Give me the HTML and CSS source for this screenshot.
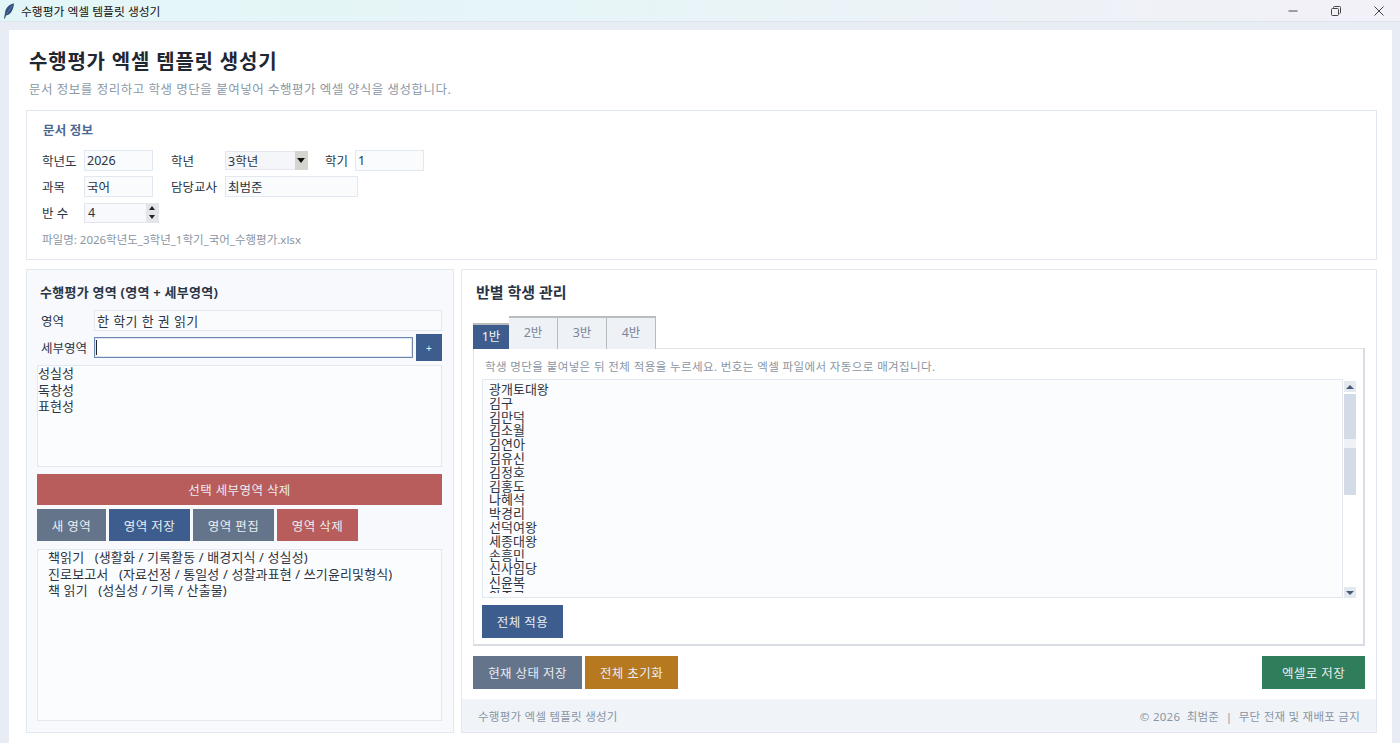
FILE: index.html
```html
<!DOCTYPE html>
<html lang="ko">
  <head>
    <meta charset="UTF-8" />
    <meta name="viewport" content="width=device-width, initial-scale=1.0" />
    <title>수행평가 엑셀 템플릿 생성기</title>
    <link rel="stylesheet" href="styles.css">
  </head>
  <body>
    <!-- 창 제목 표시줄 -->
    <header class="titlebar">
      <svg class="app-icon" width="12" height="16" viewBox="0 0 12 16">
        <path d="M11 0.5C6.5 1 2.5 4.5 2 10L1 15.5H2L3 12.5C8 12 10.5 6.5 11 0.5Z" fill="#34507e" />
        <path d="M9 3L3.5 11" stroke="#7f97bb" stroke-width="0.6" />
      </svg>
      <span class="titlebar-text">수행평가 엑셀 템플릿 생성기</span>
      <div class="window-controls">
        <svg width="10" height="10" viewBox="0 0 10 10"><path d="M0.5 5H9.5" stroke="#666" stroke-width="1.2" /></svg>
        <svg width="10" height="10" viewBox="0 0 10 10" fill="none" stroke="#444"><rect x="0.5" y="2.5" width="7" height="7" rx="1" /><path d="M2.5 2.5V1.5Q2.5 0.5 3.5 0.5H8.5Q9.5 0.5 9.5 1.5V6.5Q9.5 7.5 8.5 7.5" /></svg>
        <svg width="10" height="10" viewBox="0 0 10 10"><path d="M0.5 0.5L9.5 9.5M9.5 0.5L0.5 9.5" stroke="#444" /></svg>
      </div>
    </header>

    <main class="app-card">
      <h1 class="app-title">수행평가 엑셀 템플릿 생성기</h1>
      <p class="app-desc">문서 정보를 정리하고 학생 명단을 붙여넣어 수행평가 엑셀 양식을 생성합니다.</p>

      <!-- 문서 정보 -->
      <section class="doc-box">
        <h2 class="doc-title">문서 정보</h2>
        <div class="doc-row">
          <label class="doc-label">학년도</label>
          <input class="field field-short" value="2026" />
          <label class="doc-label doc-label-2">학년</label>
          <div class="select-box"><span>3학년</span><span class="select-arrow"></span></div>
          <label class="doc-label doc-label-3">학기</label>
          <input class="field field-short" value="1" />
        </div>
        <div class="doc-row">
          <label class="doc-label">과목</label>
          <input class="field field-short" value="국어" />
          <label class="doc-label doc-label-2">담당교사</label>
          <input class="field field-teacher" value="최범준" />
        </div>
        <div class="doc-row">
          <label class="doc-label">반 수</label>
          <div class="spin-box">
            <span>4</span>
            <span class="spin-btns"><i class="arrow-up"></i><i class="arrow-down"></i></span>
          </div>
        </div>
        <p class="file-name">파일명: 2026학년도_3학년_1학기_국어_수행평가.xlsx</p>
      </section>

      <div class="columns">
        <!-- 수행평가 영역 -->
        <section class="area-panel">
          <h2 class="area-title">수행평가 영역 (영역 + 세부영역)</h2>
          <div class="area-row">
            <label class="area-label">영역</label>
            <input class="field field-grow" value="한 학기 한 권 읽기" />
          </div>
          <div class="area-row area-row-sub">
            <label class="area-label">세부영역</label>
            <div class="field-focus"><span class="caret"></span></div>
            <button class="btn btn-blue btn-plus">+</button>
          </div>
          <div class="list-box sub-list">
            <div>성실성</div>
            <div>독창성</div>
            <div>표현성</div>
          </div>
          <button class="btn btn-red btn-wide">선택 세부영역 삭제</button>
          <div class="btn-row">
            <button class="btn btn-gray btn-new">새 영역</button>
            <button class="btn btn-blue btn-area">영역 저장</button>
            <button class="btn btn-gray btn-area">영역 편집</button>
            <button class="btn btn-red btn-area">영역 삭제</button>
          </div>
          <div class="list-box area-list">
            <div>책읽기&nbsp;&nbsp;&nbsp;(생활화 / 기록활동 / 배경지식 / 성실성)</div>
            <div>진로보고서&nbsp;&nbsp;&nbsp;(자료선정 / 통일성 / 성찰과표현 / 쓰기윤리및형식)</div>
            <div>책 읽기&nbsp;&nbsp;&nbsp;(성실성 / 기록 / 산출물)</div>
          </div>
        </section>

        <!-- 반별 학생 관리 -->
        <section class="class-panel">
          <div class="class-body">
            <h2 class="class-title">반별 학생 관리</h2>
            <div class="tabs">
              <div class="tab tab-active">1반</div>
              <div class="tab">2반</div>
              <div class="tab">3반</div>
              <div class="tab">4반</div>
            </div>
            <div class="tab-pane">
              <p class="hint">학생 명단을 붙여넣은 뒤 전체 적용을 누르세요. 번호는 엑셀 파일에서 자동으로 매겨집니다.</p>
              <div class="names-wrap">
                <div class="names">
                  <div class="names-inner">
                    <div>광개토대왕</div>
                    <div>김구</div>
                    <div>김만덕</div>
                    <div>김소월</div>
                    <div>김연아</div>
                    <div>김유신</div>
                    <div>김정호</div>
                    <div>김홍도</div>
                    <div>나혜석</div>
                    <div>박경리</div>
                    <div>선덕여왕</div>
                    <div>세종대왕</div>
                    <div>손흥민</div>
                    <div>신사임당</div>
                    <div>신윤복</div>
                    <div>안중근</div>
                  </div>
                </div>
                <div class="scrollbar">
                  <div class="scroll-btn"><i class="arrow-up"></i></div>
                  <div class="scroll-track">
                    <div class="scroll-thumb"><span class="scroll-grip"></span></div>
                  </div>
                  <div class="scroll-btn"><i class="arrow-down"></i></div>
                </div>
              </div>
              <button class="btn btn-blue btn-apply">전체 적용</button>
            </div>
            <div class="action-row">
              <button class="btn btn-gray btn-save">현재 상태 저장</button>
              <button class="btn btn-orange btn-reset">전체 초기화</button>
              <button class="btn btn-green btn-excel">엑셀로 저장</button>
            </div>
          </div>
          <footer class="class-footer">
            <span>수행평가 엑셀 템플릿 생성기</span>
            <span>© 2026 &nbsp;최범준 &nbsp;|&nbsp; 무단 전재 및 재배포 금지</span>
          </footer>
        </section>
      </div>
    </main>
  </body>
</html>
```

FILE: styles.css
```css
* {
  box-sizing: border-box;
}

html,
body {
  height: 100%;
}

body {
  margin: 0;
  display: flex;
  flex-direction: column;
  overflow: hidden;
  background-color: #e8edf5;
  color: #2b3442;
  font-family: "Noto Sans", "Noto Sans CJK KR", sans-serif;
  font-size: 12.5px;
}

/* 제목 표시줄 */
.titlebar {
  flex: none;
  display: flex;
  align-items: center;
  height: 22px;
  padding-left: 3px;
  background: linear-gradient(90deg, #e3f6f7 0%, #e6f5f7 40%, #f3f0f8 100%);
  border-bottom: 1px solid #dfe3ea;
}

.titlebar-text {
  margin-left: 6px;
  color: #111;
  font-size: 11.8px;
}

.window-controls {
  margin-left: auto;
  display: flex;
  gap: 33px;
  padding-right: 16px;
}

/* 본문 카드 */
.app-card {
  flex: 1;
  min-height: 0;
  display: flex;
  flex-direction: column;
  margin: 8px 8px 0 9px;
  padding: 0 15px 10px 17px;
  background-color: #fff;
}

.app-title {
  margin: 18px 0 0 3px;
  height: 28px;
  color: #1f2733;
  font-size: 20px;
  font-weight: 700;
  line-height: 28px;
  letter-spacing: 0.8px;
}

.app-desc {
  margin: 5px 0 0 3px;
  height: 18px;
  color: #8c98a8;
  font-size: 12.5px;
  line-height: 18px;
  letter-spacing: 0.52px;
}

/* 문서 정보 */
.doc-box {
  flex: none;
  height: 150px;
  margin-top: 11px;
  padding: 11px 15px 0;
  border: 1px solid #e2e8f0;
}

.doc-title {
  margin: 0 0 10px 1px;
  height: 18px;
  color: #4a6792;
  font-size: 12.5px;
  font-weight: 700;
  line-height: 18px;
  letter-spacing: 0.2px;
}

.doc-row {
  display: flex;
  align-items: center;
  height: 21px;
  margin-bottom: 5px;
}

.doc-label {
  width: 42px;
}

.doc-label-2 {
  width: 54px;
  margin-left: 18px;
}

.doc-label-3 {
  width: 30px;
  margin-left: 17px;
}

.field {
  height: 21px;
  padding: 0 2px;
  background-color: #f9fbfd;
  border: 1px solid #e2e8f0;
  color: #2b3442;
  font-family: inherit;
  font-size: 12.5px;
  outline: none;
}

.field-short {
  width: 69px;
}

.field-teacher {
  width: 133px;
}

.field-grow {
  flex: 1;
  min-width: 0;
  font-size: 13px;
  letter-spacing: 0.4px;
}

.select-box {
  display: flex;
  align-items: center;
  justify-content: space-between;
  width: 83px;
  height: 19px;
  padding-left: 2px;
  background-color: #f4f6f9;
  border: 1px solid #e4e8ee;
}

.select-arrow {
  position: relative;
  width: 13px;
  height: 19px;
  margin-right: -1px;
  background-color: #d5d5d0;
}

.select-arrow::after {
  content: "";
  position: absolute;
  top: 7px;
  left: 2px;
  border-left: 4px solid transparent;
  border-right: 4px solid transparent;
  border-top: 5px solid #111;
}

.spin-box {
  display: flex;
  align-items: center;
  justify-content: space-between;
  width: 75px;
  height: 20px;
  padding-left: 3px;
  background-color: #f7f9fc;
  border: 1px solid #e2e6ec;
}

.spin-btns {
  display: flex;
  flex-direction: column;
  justify-content: space-around;
  align-items: center;
  width: 12px;
  height: 18px;
  background-color: #e3e5e8;
}

.spin-btns .arrow-up {
  border-left-width: 3px;
  border-right-width: 3px;
  border-bottom-color: #222;
}

.spin-btns .arrow-down {
  border-left-width: 3px;
  border-right-width: 3px;
  border-top-color: #222;
}

.arrow-up,
.arrow-down {
  display: block;
  width: 0;
  height: 0;
  border-left: 4px solid transparent;
  border-right: 4px solid transparent;
}

.arrow-up {
  border-bottom: 4px solid #475a7a;
}

.arrow-down {
  border-top: 4px solid #475a7a;
}

.file-name {
  margin: 9px 0 0;
  color: #8a95a3;
  font-size: 11.5px;
  line-height: 16px;
}

/* 아래쪽 2단 */
.columns {
  flex: 1;
  min-height: 0;
  display: flex;
  gap: 7px;
  margin-top: 9px;
}

.area-panel {
  flex: none;
  width: 428px;
  padding: 13px 11px 0 10px;
  background-color: #f7f9fc;
  border: 1px solid #e2e8f0;
}

.area-title {
  margin: 0 0 9px 3px;
  height: 18px;
  color: #2b3442;
  font-size: 13px;
  font-weight: 700;
  line-height: 18px;
  letter-spacing: 0.25px;
}

.area-row {
  display: flex;
  align-items: center;
  height: 21px;
}

.area-row-sub {
  height: 27px;
  margin-top: 3px;
  margin-bottom: 4px;
}

.area-label {
  flex: none;
  width: 57px;
  padding-left: 4px;
}

.field-focus {
  flex: 1;
  height: 21px;
  padding: 2px 1px;
  background-color: #fff;
  border: 1px solid #6d88b0;
  box-shadow: inset 0 0 0 1px #dfe6f0;
}

.caret {
  display: block;
  width: 1px;
  height: 15px;
  background-color: #1f2733;
}

.btn {
  border: 1px solid transparent;
  color: #e8edf3;
  font-family: inherit;
  font-size: 12.5px;
  letter-spacing: 0.4px;
  padding: 0;
}

.btn-blue {
  background-color: #3c5d8d;
}

.btn-gray {
  background-color: #64748b;
}

.btn-red {
  background-color: #b95c5c;
}

.btn-orange {
  background-color: #b7791f;
}

.btn-green {
  background-color: #2f7d5b;
}

.btn-plus {
  flex: none;
  width: 26px;
  height: 27px;
  margin-left: 3px;
  font-size: 10px;
}

.list-box {
  background-color: #fbfcfe;
  border: 1px solid #e2e8f0;
  font-size: 13px;
  line-height: 16.5px;
}

.list-box div:first-child {
  margin-top: -1px;
}

.sub-list {
  height: 102px;
}

.btn-wide {
  display: block;
  width: 100%;
  height: 31px;
  margin-top: 7px;
}

.btn-row {
  display: flex;
  gap: 3px;
  margin-top: 4px;
  height: 32px;
}

.btn-new {
  width: 69px;
}

.btn-area {
  width: 81px;
}

.area-list {
  height: 172px;
  margin-top: 8px;
  padding-left: 10px;
  letter-spacing: 0.12px;
}

.class-panel {
  flex: 1;
  min-width: 0;
  display: flex;
  flex-direction: column;
  border: 1px solid #e2e8f0;
}

.class-body {
  flex: 1;
  min-height: 0;
  padding: 0 11px;
}

.class-title {
  margin: 12px 0 0 3px;
  height: 20px;
  color: #2b3442;
  font-size: 15px;
  font-weight: 700;
  line-height: 20px;
}

.tabs {
  display: flex;
  align-items: flex-end;
  height: 34px;
  margin-top: 13px;
}

.tab {
  width: 49px;
  height: 33px;
  padding-top: 6px;
  background-color: #eef2f7;
  border: 1px solid #b9bcbc;
  border-top-width: 2px;
  border-bottom: 0;
  border-left-width: 0;
  color: #7a8698;
  text-align: center;
  line-height: 18px;
}

.tab-active {
  width: 36px;
  height: 26px;
  padding-top: 3px;
  background-color: #3c5d8d;
  border-color: #b9bcbc;
  border-right: 0;
  color: #eef2f7;
}

.tab-pane {
  height: 298px;
  margin-top: -1px;
  padding: 10px 7px 0 8px;
  background-color: #fff;
  border: 1px solid #dfe3ea;
  border-right: 2px solid #d8dde5;
  border-bottom: 2px solid #d8dde5;
}

.hint {
  margin: 0 0 4px 3px;
  height: 16px;
  color: #8a95a3;
  font-size: 11.5px;
  line-height: 16px;
  letter-spacing: 0.4px;
}

.names-wrap {
  display: flex;
  height: 219px;
}

.names {
  flex: 1;
  min-width: 0;
  padding: 3px 6px 4px;
  background-color: #fbfcfe;
  border: 1px solid #e2e8f0;
  font-size: 13px;
  line-height: 13.8px;
}

.names-inner {
  height: 100%;
  overflow: hidden;
}

.scrollbar {
  flex: none;
  display: flex;
  flex-direction: column;
  width: 13px;
  padding-top: 2px;
}

.scroll-btn {
  display: flex;
  align-items: center;
  justify-content: center;
  width: 12px;
  height: 11px;
  margin-left: 1px;
  background-color: #e4e8ef;
}

.scroll-track {
  flex: 1;
  padding-top: 2px;
}

.scroll-thumb {
  display: flex;
  align-items: flex-start;
  width: 12px;
  height: 101px;
  margin-left: 1px;
  padding-top: 45px;
  background-color: #d3dbe6;
}

.scroll-grip {
  display: block;
  width: 100%;
  height: 9px;
  background-color: #eef1f5;
}

.btn-apply {
  display: block;
  width: 81px;
  height: 33px;
  margin-top: 7px;
}

.action-row {
  display: flex;
  gap: 3px;
  height: 33px;
  margin-top: 10px;
}

.btn-save {
  width: 109px;
}

.btn-reset {
  width: 93px;
}

.btn-excel {
  width: 103px;
  margin-left: auto;
}

.class-footer {
  flex: none;
  display: flex;
  justify-content: space-between;
  align-items: center;
  height: 33px;
  padding: 0 16px;
  background-color: #f0f4f9;
  color: #8a95a3;
  font-size: 11.5px;
  letter-spacing: 0.25px;
}
```
